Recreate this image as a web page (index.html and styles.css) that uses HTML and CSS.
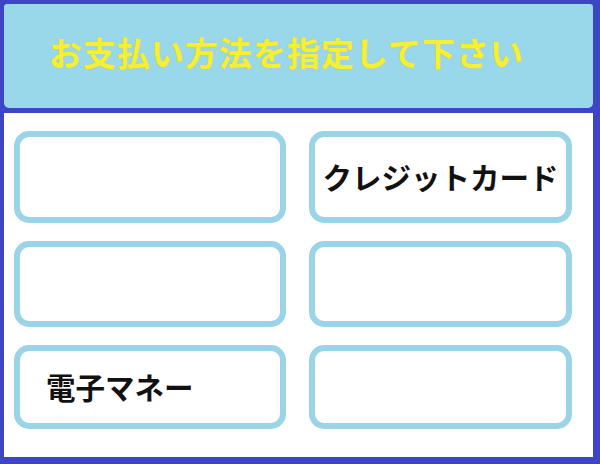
FILE: index.html
```html
<!DOCTYPE html>
<html lang="ja">
<head>
  <meta charset="UTF-8" />
  <meta name="viewport" content="width=device-width, initial-scale=1.0" />
  <title>お支払い方法</title>
  <link rel="stylesheet" href="styles.css">
</head>
<body>
  <div class="screen">
    <header class="title-bar">
      <h1>お支払い方法を指定して下さい</h1>
    </header>

    <main class="panel">
      <button class="pay-option"></button>
      <button class="pay-option center">クレジットカード</button>
      <button class="pay-option"></button>
      <button class="pay-option"></button>
      <button class="pay-option">電子マネー</button>
      <button class="pay-option"></button>
    </main>
  </div>
</body>
</html>
```

FILE: styles.css
```css
:root {
  --frame: #3d45c6;
  --header-bg: #99d7ea;
  --title: #f6f034;
  --card-border: #9bd4e6;
}

* {
  margin: 0;
  padding: 0;
  box-sizing: border-box;
  font-family: "Noto Sans CJK JP", "Noto Sans", sans-serif;
}

html, body {
  width: 600px;
  height: 464px;
  overflow: hidden;
}

body {
  background: var(--frame);
}

.screen {
  display: flex;
  flex-direction: column;
  gap: 5px;
  padding: 4px 7px 7px 4px;
  height: 100%;
}

.title-bar {
  height: 104px;
  background: var(--header-bg);
  border-radius: 3px 3px 5px 5px;
  display: flex;
  align-items: center;
  padding: 0 0 8px 45px;
}

.title-bar h1 {
  color: var(--title);
  font-size: 33px;
  font-weight: 700;
  letter-spacing: 1px;
  line-height: 1;
  text-shadow: 0 0 1px #d8c020;
}

.panel {
  flex: 1;
  background: #fff;
  display: grid;
  grid-template-columns: 272px 263px;
  grid-template-rows: 92px 86px 84px;
  column-gap: 23px;
  row-gap: 18px;
  padding: 18px 0 0 10px;
}

.pay-option {
  border: 6px solid var(--card-border);
  border-radius: 15px;
  background: #fff;
  color: #111;
  font-size: 29.5px;
  font-weight: 700;
  text-align: left;
  padding-left: 26px;
  line-height: 1;
  cursor: pointer;
}

.pay-option.center {
  text-align: center;
  padding-left: 0;
}
```
